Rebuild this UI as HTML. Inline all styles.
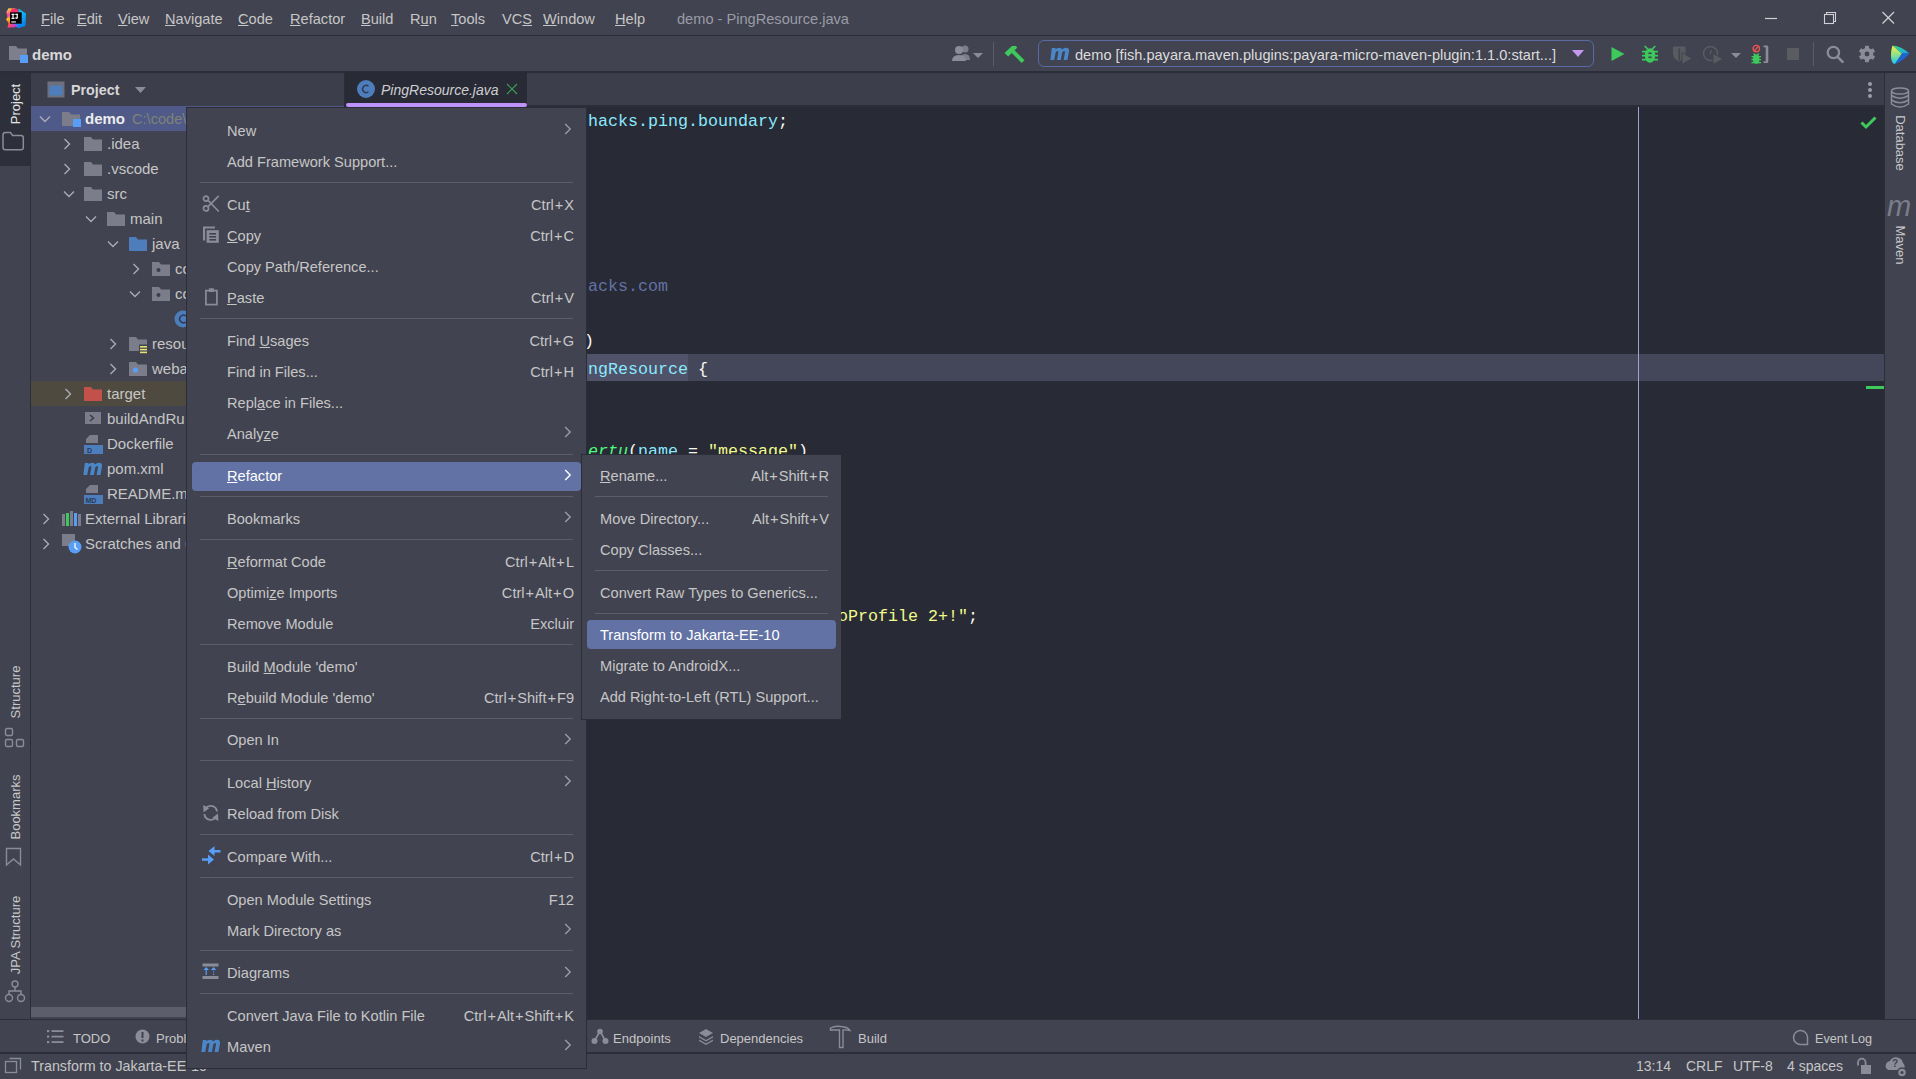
<!DOCTYPE html><html><head><meta charset="utf-8"><style>
html,body{margin:0;padding:0;}
body{width:1916px;height:1079px;overflow:hidden;position:relative;background:#414350;font-family:"Liberation Sans",sans-serif;}
.t{position:absolute;white-space:nowrap;line-height:20px;height:20px;}
.r{position:absolute;}
.s{position:absolute;overflow:visible;}
.u{text-decoration:underline;text-underline-offset:1px;text-decoration-thickness:1px;}
.code{position:absolute;white-space:pre;font-family:"Liberation Mono",monospace;font-size:16.67px;line-height:20px;height:20px;}
</style></head><body>
<div class="r" style="left:0px;top:0px;width:1916px;height:35px;background:#414350;"></div>
<div class="r" style="left:0px;top:35px;width:1916px;height:1px;background:#2b2d38;"></div>
<svg class="s" style="left:6px;top:8px;" width="21" height="21" viewBox="0 0 21 21"><defs><linearGradient id="ijl" x1="0" y1="0" x2="0" y2="1"><stop offset="0" stop-color="#fcd33a"/><stop offset="0.35" stop-color="#fc3fa8"/><stop offset="0.55" stop-color="#fcc41a"/><stop offset="0.75" stop-color="#fc6a2a"/><stop offset="1" stop-color="#fc318c"/></linearGradient>
<linearGradient id="ijr" x1="0" y1="0" x2="0.3" y2="1"><stop offset="0" stop-color="#14d6f5"/><stop offset="1" stop-color="#0a82f0"/></linearGradient></defs>
<polygon points="2.5,0.3 9,0.6 11,2.5 12,11 7,19 1.5,20 2.5,15 0,11.5 1.5,9 0.3,4" fill="url(#ijl)"/>
<polygon points="6,0.5 11,0.8 13,3.5 8,7 4,4" fill="#fc2f6e"/>
<polygon points="12.5,0.5 20,5.5 19.5,18 12,20.3 7,16 13,10" fill="url(#ijr)"/>
<polygon points="4,16 8,15 12,18 7,20" fill="#e03ad0" opacity="0.8"/>
<rect x="4" y="4.3" width="11.7" height="11.4" fill="#000"/>
<g fill="#fff"><rect x="5.4" y="5.8" width="3.2" height="1.1"/><rect x="6.4" y="5.8" width="1.2" height="5"/><rect x="5.4" y="9.8" width="3.2" height="1.1"/><rect x="9.2" y="5.8" width="2.6" height="1.1"/><rect x="10.6" y="5.8" width="1.2" height="4.4"/><path d="M8.8 9.6 Q9.3 10.9 10.4 10.9 Q11.8 10.9 11.8 9.6 V9.2 H10.6 V9.6 Q10.5 9.8 10.3 9.8 Q9.9 9.8 9.8 9.4 Z"/></g>
<rect x="5.3" y="13.4" width="4.6" height="1.1" fill="#fff"/></svg>
<div class="t" style="left:41px;top:8.50px;font-size:14.6px;color:#c6c6c6;font-weight:normal;font-style:normal;font-family:"Liberation Sans", sans-serif;"><span class="u">F</span>ile</div>
<div class="t" style="left:77px;top:8.50px;font-size:14.6px;color:#c6c6c6;font-weight:normal;font-style:normal;font-family:"Liberation Sans", sans-serif;"><span class="u">E</span>dit</div>
<div class="t" style="left:118px;top:8.50px;font-size:14.6px;color:#c6c6c6;font-weight:normal;font-style:normal;font-family:"Liberation Sans", sans-serif;"><span class="u">V</span>iew</div>
<div class="t" style="left:165px;top:8.50px;font-size:14.6px;color:#c6c6c6;font-weight:normal;font-style:normal;font-family:"Liberation Sans", sans-serif;"><span class="u">N</span>avigate</div>
<div class="t" style="left:238px;top:8.50px;font-size:14.6px;color:#c6c6c6;font-weight:normal;font-style:normal;font-family:"Liberation Sans", sans-serif;"><span class="u">C</span>ode</div>
<div class="t" style="left:290px;top:8.50px;font-size:14.6px;color:#c6c6c6;font-weight:normal;font-style:normal;font-family:"Liberation Sans", sans-serif;"><span class="u">R</span>efactor</div>
<div class="t" style="left:361px;top:8.50px;font-size:14.6px;color:#c6c6c6;font-weight:normal;font-style:normal;font-family:"Liberation Sans", sans-serif;"><span class="u">B</span>uild</div>
<div class="t" style="left:410px;top:8.50px;font-size:14.6px;color:#c6c6c6;font-weight:normal;font-style:normal;font-family:"Liberation Sans", sans-serif;">R<span class="u">u</span>n</div>
<div class="t" style="left:451px;top:8.50px;font-size:14.6px;color:#c6c6c6;font-weight:normal;font-style:normal;font-family:"Liberation Sans", sans-serif;"><span class="u">T</span>ools</div>
<div class="t" style="left:502px;top:8.50px;font-size:14.6px;color:#c6c6c6;font-weight:normal;font-style:normal;font-family:"Liberation Sans", sans-serif;">VC<span class="u">S</span></div>
<div class="t" style="left:543px;top:8.50px;font-size:14.6px;color:#c6c6c6;font-weight:normal;font-style:normal;font-family:"Liberation Sans", sans-serif;"><span class="u">W</span>indow</div>
<div class="t" style="left:615px;top:8.50px;font-size:14.6px;color:#c6c6c6;font-weight:normal;font-style:normal;font-family:"Liberation Sans", sans-serif;"><span class="u">H</span>elp</div>
<div class="t" style="left:677px;top:8.50px;font-size:14.6px;color:#9a9ca6;font-weight:normal;font-style:normal;font-family:"Liberation Sans", sans-serif;">demo - PingResource.java</div>
<svg class="s" style="left:1760px;top:8px;" width="140" height="22" viewBox="0 0 140 22"><line x1="5" y1="10.5" x2="17" y2="10.5" stroke="#cfcfd4" stroke-width="1.2"/>
<rect x="64.5" y="6.5" width="9" height="9" fill="none" stroke="#cfcfd4" stroke-width="1.1"/>
<path d="M66.5 6.5 V4.5 H75.5 V13.5 H73.5" fill="none" stroke="#cfcfd4" stroke-width="1.1"/>
<line x1="122.5" y1="4" x2="134" y2="15.5" stroke="#cfcfd4" stroke-width="1.2"/>
<line x1="134" y1="4" x2="122.5" y2="15.5" stroke="#cfcfd4" stroke-width="1.2"/></svg>
<div class="r" style="left:0px;top:36px;width:1916px;height:35px;background:#414350;"></div>
<div class="r" style="left:0px;top:71px;width:1916px;height:2px;background:#2b2d38;"></div>
<svg class="s" style="left:9px;top:46px;" width="20" height="20" viewBox="0 0 20 20"><path d="M0 0 H7 L9 2.5 H18 V14 H0 Z" fill="#7d808c"/><rect x="11" y="9" width="8" height="8" fill="#589df6"/></svg>
<div class="t" style="left:32px;top:44.50px;font-size:15px;color:#d8d8d8;font-weight:bold;font-style:normal;font-family:"Liberation Sans", sans-serif;">demo</div>
<svg class="s" style="left:950px;top:44px;" width="36" height="20" viewBox="0 0 36 20"><circle cx="15" cy="5" r="3.5" fill="#7c7f8a"/><path d="M10 16 Q10 10 15 10 Q20 10 20 16 Z" fill="#7c7f8a"/>
<circle cx="9" cy="6" r="4" fill="#8a8d98"/><path d="M2 17 Q2 11 9 11 Q16 11 16 17 Z" fill="#8a8d98"/>
<polygon points="23,9 33,9 28,14" fill="#8a8d98"/></svg>
<div class="r" style="left:993px;top:42px;width:1px;height:24px;background:#5a5c66;"></div>
<svg class="s" style="left:1004px;top:45px;" width="22" height="19" viewBox="0 0 22 19"><path d="M0.5 8 L8 1 L12 1 L13.2 2.8 L4.2 11.5 Z" fill="#3ec95c"/><path d="M6.5 6.8 L9.3 4 L20.5 15.2 L17.7 18 Z" fill="#3ec95c"/></svg>
<div class="r" style="left:1038px;top:40px;width:556px;height:27px;background:transparent;box-sizing:border-box;border:1.7px solid #5b6aa3;border-radius:6px;"></div>
<svg class="s" style="left:1049px;top:47px;" width="22" height="14" viewBox="0 0 22 14"><path d="M2.8 1 H6.6 L6.4 2.3 Q8 0.6 10.4 0.7 Q12.6 0.8 13 2.4 Q14.8 0.6 17.2 0.7 Q20.6 0.9 20 4.6 L18.4 13 H14.6 L16 5.6 Q16.3 3.9 15 3.9 Q13.6 3.9 13.2 5.7 L11.8 13 H8 L9.4 5.6 Q9.7 3.9 8.4 3.9 Q7 3.9 6.6 5.7 L5.2 13 H1.4 Z" fill="#4a86c8"/></svg>
<div class="t" style="left:1075px;top:45.00px;font-size:14.6px;color:#dcdcdc;font-weight:normal;font-style:normal;font-family:"Liberation Sans", sans-serif;letter-spacing:0.05px;">demo [fish.payara.maven.plugins:payara-micro-maven-plugin:1.1.0:start...]</div>
<svg class="s" style="left:1571px;top:49px;" width="14" height="10" viewBox="0 0 14 10"><polygon points="1,1 13,1 7,8" fill="#c39af0"/></svg>
<svg class="s" style="left:1610px;top:46px;" width="16" height="16" viewBox="0 0 16 16"><polygon points="1.5,1 14.5,8 1.5,15" fill="#3ec95c"/></svg>
<svg class="s" style="left:1642px;top:45px;" width="16" height="19" viewBox="0 0 16 19"><g fill="#3ec95c"><path d="M3.2 0.5 L6.3 3.6 L5.2 4.7 L2.1 1.6 Z"/><path d="M12.8 0.5 L9.7 3.6 L10.8 4.7 L13.9 1.6 Z"/><ellipse cx="8" cy="10.5" rx="5.2" ry="7.3"/><rect x="0" y="5.8" width="16" height="1.7"/><rect x="0" y="9.8" width="16" height="1.7"/><rect x="0" y="13.8" width="16" height="1.7"/></g><g fill="#414350"><rect x="6.4" y="7.5" width="3.2" height="1.6"/><rect x="6.4" y="11.5" width="3.2" height="1.6"/></g></svg>
<svg class="s" style="left:1672px;top:46px;" width="22" height="19" viewBox="0 0 22 19"><path d="M1 0.5 H13.5 V8 Q13.5 13 7.2 15.5 Q1 13 1 8 Z" fill="#5a5b60"/><rect x="6.5" y="2.5" width="1.6" height="12" fill="#414350"/><polygon points="10,6.5 20,12.5 10,18.5" fill="#5a5b60" stroke="#414350" stroke-width="1"/></svg>
<svg class="s" style="left:1702px;top:45px;" width="22" height="20" viewBox="0 0 22 20"><circle cx="8.5" cy="8.5" r="7" fill="none" stroke="#5a5b60" stroke-width="1.5"/><path d="M9.5 5 L8 9.5" stroke="#5a5b60" stroke-width="1.2" fill="none"/><polygon points="11,8.5 21,14 11,19.5" fill="#5a5b60" stroke="#414350" stroke-width="1"/></svg>
<svg class="s" style="left:1730px;top:52px;" width="12" height="8" viewBox="0 0 12 8"><polygon points="1,1 11,1 6,6" fill="#8a8d98"/></svg>
<svg class="s" style="left:1751px;top:44px;" width="22" height="22" viewBox="0 0 22 22"><circle cx="5.3" cy="4.6" r="3.2" fill="none" stroke="#e8544f" stroke-width="1.4"/><line x1="3" y1="6.9" x2="7.6" y2="2.3" stroke="#e8544f" stroke-width="1.4"/>
<g fill="#3ec95c"><ellipse cx="5.2" cy="15" rx="3.3" ry="4.8"/><rect x="0.5" y="12" width="9.5" height="1.3"/><rect x="0.5" y="15" width="9.5" height="1.3"/><rect x="0.5" y="18" width="9.5" height="1.3"/><path d="M2.5 9.5 L4.5 11.5 M8 9.5 L6 11.5" stroke="#3ec95c" stroke-width="1.1"/></g>
<path d="M12.5 1.5 H16 Q17.3 1.5 17.3 3 V17.5 Q17.3 19 16 19 H12.5 V17.3 H14.7 V3.2 H12.5 Z" fill="#8a8d98"/></svg>
<div class="r" style="left:1787px;top:48px;width:12px;height:12px;background:#5b5c60;"></div>
<div class="r" style="left:1813px;top:42px;width:1px;height:24px;background:#5a5c66;"></div>
<svg class="s" style="left:1825px;top:45px;" width="20" height="20" viewBox="0 0 20 20"><circle cx="8.4" cy="7.5" r="5.7" fill="none" stroke="#8a8d98" stroke-width="2.3"/><line x1="12.4" y1="11.6" x2="17.6" y2="16.9" stroke="#8a8d98" stroke-width="2.6" stroke-linecap="round"/></svg>
<svg class="s" style="left:1858px;top:45px;" width="20" height="20" viewBox="0 0 20 20"><g transform="translate(9,9)" fill="#8a8d98"><circle r="6.2"/>
<rect x="-2" y="-8.2" width="4" height="16.4" rx="0.6"/><rect x="-2" y="-8.2" width="4" height="16.4" rx="0.6" transform="rotate(60)"/><rect x="-2" y="-8.2" width="4" height="16.4" rx="0.6" transform="rotate(-60)"/>
<circle r="2.4" fill="#414350"/></g></svg>
<svg class="s" style="left:1889px;top:44px;" width="22" height="22" viewBox="0 0 22 22"><defs><linearGradient id="tbl" x1="0" y1="0" x2="0" y2="1"><stop offset="0" stop-color="#f6f23e"/><stop offset="0.5" stop-color="#8fe08a"/><stop offset="1" stop-color="#17c8f2"/></linearGradient><linearGradient id="tbr" x1="0" y1="0" x2="1" y2="1"><stop offset="0" stop-color="#3ddc84"/><stop offset="1" stop-color="#14a2f0"/></linearGradient></defs>
<path d="M3.5 1.5 L13 9.5 L6 20 Q3.5 20 2.5 16 Q1 10 3.5 1.5 Z" fill="url(#tbl)"/><path d="M3.5 1.5 Q12 2 20.5 9.5 H13 Z" fill="url(#tbr)"/><path d="M13 9.5 H20.5 Q14 17 6 20 Z" fill="#1d64d4"/></svg>
<div class="r" style="left:0px;top:73px;width:30px;height:947px;background:#414350;"></div>
<div class="r" style="left:30px;top:73px;width:1px;height:947px;background:#2b2d38;"></div>
<div class="r" style="left:0px;top:73px;width:30px;height:93px;background:#2d2f3b;"></div>
<div class="t" style="left:-34.30px;top:94.10px;width:100px;text-align:center;font-size:13px;color:#e6e6e6;transform:rotate(-90deg);">Project</div>
<svg class="s" style="left:1px;top:131px;" width="24" height="20" viewBox="0 0 24 20"><path d="M2 4 Q2 1.5 4.5 1.5 H9.5 L11.5 4.5 H20 Q22.3 4.5 22.3 7 V16.5 Q22.3 18.8 20 18.8 H4.5 Q2 18.8 2 16.5 Z" fill="none" stroke="#8a8d98" stroke-width="1.5"/></svg>
<div class="r" style="left:31px;top:73px;width:313px;height:947px;background:#414350;"></div>
<div class="r" style="left:31px;top:73px;width:313px;height:33px;background:#3c3e4c;"></div>
<div class="r" style="left:344px;top:73px;width:1px;height:947px;background:#2b2d38;"></div>
<svg class="s" style="left:47px;top:81px;" width="18" height="17" viewBox="0 0 18 17"><rect x="0.5" y="0.5" width="17" height="16" fill="#6e717c"/><rect x="2.5" y="4.5" width="13" height="10" fill="#4e7dbb"/></svg>
<div class="t" style="left:71px;top:79.50px;font-size:14.3px;color:#d6d6d6;font-weight:bold;font-style:normal;font-family:"Liberation Sans", sans-serif;">Project</div>
<svg class="s" style="left:134px;top:86px;" width="14" height="9" viewBox="0 0 14 9"><polygon points="1,1 12,1 6.5,7" fill="#8a8d98"/></svg>
<div class="r" style="left:31px;top:106px;width:313px;height:25px;background:#4f5a88;"></div>
<div class="r" style="left:31px;top:381px;width:313px;height:25px;background:#4f4a3f;"></div>
<svg class="s" style="left:39px;top:114.5px;" width="12" height="8" viewBox="0 0 12 8"><path d="M1 1.5 L6 6.5 L11 1.5" fill="none" stroke="#a9abb4" stroke-width="1.4"/></svg>
<svg class="s" style="left:62px;top:110.5px;" width="20" height="16" viewBox="0 0 20 16"><path d="M0 1 H7 L9 3.5 H18 V15 H0 Z" fill="#7b7e8a"/><rect x="11" y="8" width="8" height="8" fill="#589df6"/></svg>
<div class="t" style="left:85px;top:109.40px;font-size:15px;color:#ececec;font-weight:bold;font-style:normal;font-family:"Liberation Sans", sans-serif;">demo</div>
<div class="t" style="left:132px;top:109.40px;font-size:14.6px;color:#7f8276;font-weight:normal;font-style:normal;font-family:"Liberation Sans", sans-serif;">C:\code\</div>
<svg class="s" style="left:63px;top:137.5px;" width="8" height="12" viewBox="0 0 8 12"><path d="M1.5 1 L6.5 6 L1.5 11" fill="none" stroke="#a9abb4" stroke-width="1.4"/></svg>
<svg class="s" style="left:84px;top:135.5px;" width="20" height="16" viewBox="0 0 20 16"><path d="M0 1 H7 L9 3.5 H18 V15 H0 Z" fill="#7b7e8a"/></svg>
<div class="t" style="left:107px;top:134.40px;font-size:15px;color:#c6c6c6;font-weight:normal;font-style:normal;font-family:"Liberation Sans", sans-serif;">.idea</div>
<svg class="s" style="left:63px;top:162.5px;" width="8" height="12" viewBox="0 0 8 12"><path d="M1.5 1 L6.5 6 L1.5 11" fill="none" stroke="#a9abb4" stroke-width="1.4"/></svg>
<svg class="s" style="left:84px;top:160.5px;" width="20" height="16" viewBox="0 0 20 16"><path d="M0 1 H7 L9 3.5 H18 V15 H0 Z" fill="#7b7e8a"/></svg>
<div class="t" style="left:107px;top:159.40px;font-size:15px;color:#c6c6c6;font-weight:normal;font-style:normal;font-family:"Liberation Sans", sans-serif;">.vscode</div>
<svg class="s" style="left:63px;top:189.5px;" width="12" height="8" viewBox="0 0 12 8"><path d="M1 1.5 L6 6.5 L11 1.5" fill="none" stroke="#a9abb4" stroke-width="1.4"/></svg>
<svg class="s" style="left:84px;top:185.5px;" width="20" height="16" viewBox="0 0 20 16"><path d="M0 1 H7 L9 3.5 H18 V15 H0 Z" fill="#7b7e8a"/></svg>
<div class="t" style="left:107px;top:184.40px;font-size:15px;color:#c6c6c6;font-weight:normal;font-style:normal;font-family:"Liberation Sans", sans-serif;">src</div>
<svg class="s" style="left:85px;top:214.5px;" width="12" height="8" viewBox="0 0 12 8"><path d="M1 1.5 L6 6.5 L11 1.5" fill="none" stroke="#a9abb4" stroke-width="1.4"/></svg>
<svg class="s" style="left:107px;top:210.5px;" width="20" height="16" viewBox="0 0 20 16"><path d="M0 1 H7 L9 3.5 H18 V15 H0 Z" fill="#7b7e8a"/></svg>
<div class="t" style="left:130px;top:209.40px;font-size:15px;color:#c6c6c6;font-weight:normal;font-style:normal;font-family:"Liberation Sans", sans-serif;">main</div>
<svg class="s" style="left:107px;top:239.5px;" width="12" height="8" viewBox="0 0 12 8"><path d="M1 1.5 L6 6.5 L11 1.5" fill="none" stroke="#a9abb4" stroke-width="1.4"/></svg>
<svg class="s" style="left:129px;top:235.5px;" width="20" height="16" viewBox="0 0 20 16"><path d="M0 1 H7 L9 3.5 H18 V15 H0 Z" fill="#4e7dbb"/></svg>
<div class="t" style="left:152px;top:234.40px;font-size:15px;color:#c6c6c6;font-weight:normal;font-style:normal;font-family:"Liberation Sans", sans-serif;">java</div>
<svg class="s" style="left:132px;top:262.5px;" width="8" height="12" viewBox="0 0 8 12"><path d="M1.5 1 L6.5 6 L1.5 11" fill="none" stroke="#a9abb4" stroke-width="1.4"/></svg>
<svg class="s" style="left:152px;top:260.5px;" width="20" height="16" viewBox="0 0 20 16"><path d="M0 1 H7 L9 3.5 H18 V15 H0 Z" fill="#7b7e8a"/><circle cx="6.5" cy="9" r="2" fill="#3b3d48"/></svg>
<div class="t" style="left:175px;top:259.40px;font-size:15px;color:#c6c6c6;font-weight:normal;font-style:normal;font-family:"Liberation Sans", sans-serif;">co</div>
<svg class="s" style="left:129px;top:289.5px;" width="12" height="8" viewBox="0 0 12 8"><path d="M1 1.5 L6 6.5 L11 1.5" fill="none" stroke="#a9abb4" stroke-width="1.4"/></svg>
<svg class="s" style="left:152px;top:285.5px;" width="20" height="16" viewBox="0 0 20 16"><path d="M0 1 H7 L9 3.5 H18 V15 H0 Z" fill="#7b7e8a"/><circle cx="6.5" cy="9" r="2" fill="#3b3d48"/></svg>
<div class="t" style="left:175px;top:284.40px;font-size:15px;color:#c6c6c6;font-weight:normal;font-style:normal;font-family:"Liberation Sans", sans-serif;">co</div>
<svg class="s" style="left:174px;top:309.5px;" width="18" height="18" viewBox="0 0 18 18"><circle cx="9" cy="9" r="8.5" fill="#4e7dbb"/><path d="M11.8 6 A3.8 3.8 0 1 0 11.8 12" fill="none" stroke="#2d3a55" stroke-width="1.5"/></svg>
<svg class="s" style="left:109px;top:337.5px;" width="8" height="12" viewBox="0 0 8 12"><path d="M1.5 1 L6.5 6 L1.5 11" fill="none" stroke="#a9abb4" stroke-width="1.4"/></svg>
<svg class="s" style="left:129px;top:335.5px;" width="20" height="19" viewBox="0 0 20 19"><path d="M0 1 H7 L9 3.5 H18 V15 H0 Z" fill="#7b7e8a"/><rect x="10" y="8.5" width="9" height="10" fill="#414350"/><rect x="11" y="10" width="7" height="1.6" fill="#e4e07a"/><rect x="11" y="12.8" width="7" height="1.6" fill="#e4e07a"/><rect x="11" y="15.6" width="7" height="1.6" fill="#e4e07a"/></svg>
<div class="t" style="left:152px;top:334.40px;font-size:15px;color:#c6c6c6;font-weight:normal;font-style:normal;font-family:"Liberation Sans", sans-serif;">resou</div>
<svg class="s" style="left:109px;top:362.5px;" width="8" height="12" viewBox="0 0 8 12"><path d="M1.5 1 L6.5 6 L1.5 11" fill="none" stroke="#a9abb4" stroke-width="1.4"/></svg>
<svg class="s" style="left:129px;top:360.5px;" width="20" height="16" viewBox="0 0 20 16"><path d="M0 1 H7 L9 3.5 H18 V15 H0 Z" fill="#7b7e8a"/><circle cx="6.5" cy="9" r="2.6" fill="#589df6"/></svg>
<div class="t" style="left:152px;top:359.40px;font-size:15px;color:#c6c6c6;font-weight:normal;font-style:normal;font-family:"Liberation Sans", sans-serif;">weba</div>
<svg class="s" style="left:64px;top:387.5px;" width="8" height="12" viewBox="0 0 8 12"><path d="M1.5 1 L6.5 6 L1.5 11" fill="none" stroke="#a9abb4" stroke-width="1.4"/></svg>
<svg class="s" style="left:84px;top:385.5px;" width="20" height="16" viewBox="0 0 20 16"><path d="M0 1 H7 L9 3.5 H18 V15 H0 Z" fill="#c2504b"/></svg>
<div class="t" style="left:107px;top:384.40px;font-size:15px;color:#c6c6c6;font-weight:normal;font-style:normal;font-family:"Liberation Sans", sans-serif;">target</div>
<svg class="s" style="left:85px;top:411.5px;" width="17" height="13" viewBox="0 0 17 13"><rect x="0" y="0" width="16" height="12" fill="#7b7e8a"/><path d="M5 3 L8.5 6 L5 9" fill="none" stroke="#3b3d48" stroke-width="1.6"/></svg>
<div class="t" style="left:107px;top:409.40px;font-size:15px;color:#c6c6c6;font-weight:normal;font-style:normal;font-family:"Liberation Sans", sans-serif;">buildAndRu</div>
<svg class="s" style="left:84px;top:434.5px;" width="20" height="19" viewBox="0 0 20 19"><path d="M6 0 H14 V8 H2 V4 Z" fill="#7b7e8a"/><rect x="0" y="10" width="19" height="9" fill="#4e7dbb"/><text x="3" y="18" font-family="Liberation Sans" font-weight="bold" font-size="7" fill="#2b3a55">D</text></svg>
<div class="t" style="left:107px;top:434.40px;font-size:15px;color:#c6c6c6;font-weight:normal;font-style:normal;font-family:"Liberation Sans", sans-serif;">Dockerfile</div>
<svg class="s" style="left:82px;top:462.0px;" width="22" height="14" viewBox="0 0 22 14"><path d="M2.8 1 H6.6 L6.4 2.3 Q8 0.6 10.4 0.7 Q12.6 0.8 13 2.4 Q14.8 0.6 17.2 0.7 Q20.6 0.9 20 4.6 L18.4 13 H14.6 L16 5.6 Q16.3 3.9 15 3.9 Q13.6 3.9 13.2 5.7 L11.8 13 H8 L9.4 5.6 Q9.7 3.9 8.4 3.9 Q7 3.9 6.6 5.7 L5.2 13 H1.4 Z" fill="#4a86c8"/></svg>
<div class="t" style="left:107px;top:459.40px;font-size:15px;color:#c6c6c6;font-weight:normal;font-style:normal;font-family:"Liberation Sans", sans-serif;">pom.xml</div>
<svg class="s" style="left:84px;top:484.5px;" width="20" height="19" viewBox="0 0 20 19"><path d="M6 0 H14 V8 H2 V4 Z" fill="#7b7e8a"/><rect x="0" y="10" width="19" height="9" fill="#4e7dbb"/><text x="1.5" y="18" font-family="Liberation Sans" font-weight="bold" font-size="7" fill="#2b3a55">MD</text></svg>
<div class="t" style="left:107px;top:484.40px;font-size:15px;color:#c6c6c6;font-weight:normal;font-style:normal;font-family:"Liberation Sans", sans-serif;">README.md</div>
<svg class="s" style="left:42px;top:512.5px;" width="8" height="12" viewBox="0 0 8 12"><path d="M1.5 1 L6.5 6 L1.5 11" fill="none" stroke="#a9abb4" stroke-width="1.4"/></svg>
<svg class="s" style="left:62px;top:510.5px;" width="20" height="15" viewBox="0 0 20 15"><rect x="0" y="3" width="3" height="12" fill="#7b7e8a"/><rect x="4" y="2" width="3" height="13" fill="#3ec95c"/><rect x="8" y="0" width="3" height="15" fill="#7b7e8a"/><rect x="12" y="2" width="3" height="13" fill="#589df6"/><rect x="16" y="3" width="3" height="12" fill="#7b7e8a"/></svg>
<div class="t" style="left:85px;top:509.40px;font-size:15px;color:#c6c6c6;font-weight:normal;font-style:normal;font-family:"Liberation Sans", sans-serif;">External Libraries</div>
<svg class="s" style="left:42px;top:537.5px;" width="8" height="12" viewBox="0 0 8 12"><path d="M1.5 1 L6.5 6 L1.5 11" fill="none" stroke="#a9abb4" stroke-width="1.4"/></svg>
<svg class="s" style="left:62px;top:533.5px;" width="22" height="20" viewBox="0 0 22 20"><rect x="0" y="0" width="13" height="12" fill="#7b7e8a"/><circle cx="13" cy="13" r="6.5" fill="#589df6"/><path d="M13 9 V13.5 L15.5 15.5" fill="none" stroke="#fff" stroke-width="1.3"/></svg>
<div class="t" style="left:85px;top:534.40px;font-size:15px;color:#c6c6c6;font-weight:normal;font-style:normal;font-family:"Liberation Sans", sans-serif;">Scratches and Consoles</div>
<div class="r" style="left:31px;top:1007px;width:313px;height:10px;background:#5c5f6b;"></div>
<div class="r" style="left:345px;top:73px;width:1539px;height:32px;background:#3c3e4c;"></div>
<div class="r" style="left:345px;top:105px;width:1539px;height:2px;background:#2b2d38;"></div>
<div class="r" style="left:345px;top:72px;width:182px;height:35px;background:#282a36;"></div>
<div class="r" style="left:346px;top:103px;width:181px;height:4px;background:#bd93f9;border-radius:2px;"></div>
<svg class="s" style="left:357px;top:80px;" width="19" height="19" viewBox="0 0 19 19"><circle cx="9" cy="9" r="9" fill="#4e7dbb"/><path d="M11.5 6.2 A3.6 3.6 0 1 0 11.5 11.8" fill="none" stroke="#2b3a55" stroke-width="1.4"/></svg>
<div class="t" style="left:381px;top:79.50px;font-size:14px;color:#cfcfcf;font-weight:normal;font-style:italic;font-family:"Liberation Sans", sans-serif;">PingResource.java</div>
<svg class="s" style="left:506px;top:83px;" width="12" height="12" viewBox="0 0 12 12"><path d="M1 1 L11 11 M11 1 L1 11" stroke="#3a9e54" stroke-width="1.2"/></svg>
<svg class="s" style="left:1866px;top:81px;" width="8" height="18" viewBox="0 0 8 18"><circle cx="4" cy="3" r="2" fill="#9a9ca6"/><circle cx="4" cy="9" r="2" fill="#9a9ca6"/><circle cx="4" cy="15" r="2" fill="#9a9ca6"/></svg>
<div class="r" style="left:345px;top:107px;width:1539px;height:913px;background:#282a36;"></div>
<div class="r" style="left:345px;top:354px;width:1539px;height:27px;background:#44475a;"></div>
<div class="r" style="left:586px;top:354px;width:102px;height:27px;background:#4f5269;"></div>
<div class="r" style="left:1638px;top:107px;width:1px;height:913px;background:#9ea2d4;"></div>
<svg class="s" style="left:1860px;top:116px;" width="17" height="13" viewBox="0 0 17 13"><path d="M1.5 6.5 L6 11 L15.5 1.5" fill="none" stroke="#3ec95c" stroke-width="3"/></svg>
<div class="r" style="left:1866px;top:386px;width:18px;height:3px;background:#3ec95c;"></div>
<div class="code" style="left:588px;top:112.16px;"><span style="color:#8be9fd">hacks.ping.boundary</span><span style="color:#f8f8f2">;</span></div>
<div class="code" style="left:588px;top:277.16px;"><span style="color:#6272a4">acks.com</span></div>
<div class="code" style="left:574px;top:332.16px;"><span style="color:#f8f8f2">")</span></div>
<div class="code" style="left:588px;top:359.66px;"><span style="color:#8be9fd">ngResource</span><span style="color:#f8f8f2"> {</span></div>
<div class="code" style="left:588px;top:442.16px;"><span style="color:#50fa7b;font-style:italic">ertu</span><span style="color:#f8f8f2">(</span><span style="color:#8be9fd">name</span><span style="color:#f8f8f2"> = </span><span style="color:#f1fa8c">"message"</span><span style="color:#f8f8f2">)</span></div>
<div class="code" style="left:838px;top:607.16px;"><span style="color:#f1fa8c">oProfile 2+!"</span><span style="color:#f8f8f2">;</span></div>
<div class="r" style="left:1884px;top:73px;width:1px;height:947px;background:#2b2d38;"></div>
<div class="r" style="left:1885px;top:73px;width:31px;height:947px;background:#414350;"></div>
<svg class="s" style="left:1890px;top:87px;" width="21" height="22" viewBox="0 0 21 22"><g fill="none" stroke="#8a8d98" stroke-width="1.5"><ellipse cx="10" cy="4" rx="8.5" ry="3"/><path d="M1.5 4 V17 Q10 23 18.5 17 V4"/><path d="M1.5 8.5 Q10 14 18.5 8.5"/><path d="M1.5 13 Q10 18.5 18.5 13"/></g></svg>
<div class="t" style="left:1849.50px;top:132.50px;width:100px;text-align:center;font-size:13px;color:#c8c8c8;transform:rotate(90deg);">Database</div>
<div class="t" style="left:1887px;top:196.00px;font-size:29px;color:#7b7e8a;font-weight:normal;font-style:normal;font-family:"Liberation Sans", sans-serif;line-height:20px;"><i>m</i></div>
<div class="t" style="left:1849.50px;top:235.00px;width:100px;text-align:center;font-size:13px;color:#c8c8c8;transform:rotate(90deg);">Maven</div>
<div class="t" style="left:-34.50px;top:682.20px;width:100px;text-align:center;font-size:13px;color:#c8c8c8;transform:rotate(-90deg);">Structure</div>
<svg class="s" style="left:4px;top:727px;" width="22" height="22" viewBox="0 0 22 22"><g fill="none" stroke="#8a8d98" stroke-width="1.4"><rect x="1.5" y="1.5" width="7" height="7" rx="1.5"/><rect x="1.5" y="12.5" width="7" height="7" rx="1.5"/><rect x="12.5" y="12.5" width="7" height="7" rx="1.5"/></g></svg>
<div class="t" style="left:-34.50px;top:796.80px;width:100px;text-align:center;font-size:13px;color:#c8c8c8;transform:rotate(-90deg);">Bookmarks</div>
<svg class="s" style="left:5px;top:847px;" width="18" height="20" viewBox="0 0 18 20"><path d="M1.5 1.5 H15.5 V18 L8.5 12 L1.5 18 Z" fill="none" stroke="#8a8d98" stroke-width="1.4"/></svg>
<div class="t" style="left:-34.50px;top:925.20px;width:100px;text-align:center;font-size:13px;color:#c8c8c8;transform:rotate(-90deg);">JPA Structure</div>
<svg class="s" style="left:4px;top:980px;" width="22" height="24" viewBox="0 0 22 24"><g fill="none" stroke="#8a8d98" stroke-width="1.4"><circle cx="11" cy="4" r="3"/><circle cx="5" cy="18" r="3.5"/><circle cx="17" cy="18" r="3.5"/><path d="M11 7 V11 M5 14.5 V11 H17 V14.5"/></g></svg>
<div class="r" style="left:0px;top:1019px;width:1916px;height:1px;background:#2b2d38;"></div>
<div class="r" style="left:0px;top:1020px;width:1916px;height:32px;background:#414350;"></div>
<div class="r" style="left:0px;top:1052px;width:1916px;height:2px;background:#2b2d38;"></div>
<div class="r" style="left:1884px;top:1020px;width:1px;height:0px;background:#2b2d38;"></div>
<svg class="s" style="left:46px;top:1029px;" width="20" height="16" viewBox="0 0 20 16"><g fill="#8a8d98"><rect x="1" y="1" width="2.2" height="2.2"/><rect x="1" y="6.5" width="2.2" height="2.2"/><rect x="1" y="12" width="2.2" height="2.2"/><rect x="5.5" y="1.2" width="12" height="1.8"/><rect x="5.5" y="6.7" width="12" height="1.8"/><rect x="5.5" y="12.2" width="12" height="1.8"/></g></svg>
<div class="t" style="left:73px;top:1028.50px;font-size:13px;color:#c6c6c6;font-weight:normal;font-style:normal;font-family:"Liberation Sans", sans-serif;">TODO</div>
<svg class="s" style="left:135px;top:1029px;" width="16" height="16" viewBox="0 0 16 16"><circle cx="7.5" cy="7.5" r="7" fill="#8a8d98"/><rect x="6.5" y="3" width="2" height="6" fill="#414350"/><rect x="6.5" y="10.5" width="2" height="2" fill="#414350"/></svg>
<div class="t" style="left:156px;top:1028.50px;font-size:13px;color:#c6c6c6;font-weight:normal;font-style:normal;font-family:"Liberation Sans", sans-serif;">Problems</div>
<svg class="s" style="left:591px;top:1028px;" width="18" height="18" viewBox="0 0 18 18"><g fill="#8a8d98"><circle cx="9" cy="3.5" r="2.8"/><circle cx="3.5" cy="13" r="3"/><circle cx="14.5" cy="13" r="3"/></g><path d="M8 5 L4 12 M10 5 L14 12" stroke="#8a8d98" stroke-width="1.6"/></svg>
<div class="t" style="left:613px;top:1028.50px;font-size:13px;color:#c6c6c6;font-weight:normal;font-style:normal;font-family:"Liberation Sans", sans-serif;">Endpoints</div>
<svg class="s" style="left:698px;top:1028px;" width="16" height="18" viewBox="0 0 16 18"><g fill="#8a8d98"><path d="M8 1 L15 5 L8 9 L1 5 Z"/><path d="M1 8 L8 12 L15 8 V9.5 L8 13.5 L1 9.5 Z"/><path d="M1 11.5 L8 15.5 L15 11.5 V13 L8 17 L1 13 Z"/></g></svg>
<div class="t" style="left:720px;top:1028.50px;font-size:13px;color:#c6c6c6;font-weight:normal;font-style:normal;font-family:"Liberation Sans", sans-serif;">Dependencies</div>
<svg class="s" style="left:829px;top:1025px;" width="24" height="24" viewBox="0 0 24 24"><path d="M1.5 3 Q6 0.5 12 1.5 Q19 2 21 5.5 Q17 4.5 14 5 V22.5 H10.5 V5 H1.5 Z" fill="none" stroke="#8a8d98" stroke-width="1.4"/></svg>
<div class="t" style="left:858px;top:1028.50px;font-size:13px;color:#c6c6c6;font-weight:normal;font-style:normal;font-family:"Liberation Sans", sans-serif;">Build</div>
<svg class="s" style="left:1792px;top:1028px;" width="18" height="18" viewBox="0 0 18 18"><path d="M15.5 16.5 V9 A7 7 0 1 0 8.5 16.5 Z" fill="none" stroke="#8a8d98" stroke-width="1.5"/></svg>
<div class="t" style="left:1815px;top:1028.50px;font-size:12.7px;color:#c6c6c6;font-weight:normal;font-style:normal;font-family:"Liberation Sans", sans-serif;">Event Log</div>
<div class="r" style="left:0px;top:1054px;width:1916px;height:25px;background:#414350;"></div>
<svg class="s" style="left:4px;top:1057px;" width="18" height="18" viewBox="0 0 18 18"><path d="M5.5 1.5 H16.5 V12.5" fill="none" stroke="#8a8d98" stroke-width="1.3"/><rect x="1.5" y="4.5" width="11" height="11" fill="none" stroke="#8a8d98" stroke-width="1.3"/></svg>
<div class="t" style="left:31px;top:1055.50px;font-size:14.3px;color:#c6c6c6;font-weight:normal;font-style:normal;font-family:"Liberation Sans", sans-serif;">Transform to Jakarta-EE-10</div>
<div class="t" style="left:1636px;top:1055.50px;font-size:14px;color:#c6c6c6;font-weight:normal;font-style:normal;font-family:"Liberation Sans", sans-serif;">13:14</div>
<div class="t" style="left:1686px;top:1055.50px;font-size:14px;color:#c6c6c6;font-weight:normal;font-style:normal;font-family:"Liberation Sans", sans-serif;">CRLF</div>
<div class="t" style="left:1733px;top:1055.50px;font-size:14px;color:#c6c6c6;font-weight:normal;font-style:normal;font-family:"Liberation Sans", sans-serif;">UTF-8</div>
<div class="t" style="left:1787px;top:1055.50px;font-size:14px;color:#c6c6c6;font-weight:normal;font-style:normal;font-family:"Liberation Sans", sans-serif;">4 spaces</div>
<svg class="s" style="left:1856px;top:1057px;" width="16" height="18" viewBox="0 0 16 18"><path d="M2 8.5 V5.5 A3.8 3.8 0 0 1 9.6 5.5 V8" fill="none" stroke="#8a8d98" stroke-width="1.8"/><rect x="5" y="8" width="10" height="9" fill="#8a8d98"/></svg>
<svg class="s" style="left:1884px;top:1056px;" width="24" height="22" viewBox="0 0 24 22"><path d="M2 12 A5 5 0 0 1 6 5 A7 7 0 0 1 19 7 A4.5 4.5 0 0 1 19 14 H4 Z" fill="#8a8d98"/><text x="8" y="11" font-family="Liberation Sans" font-weight="bold" font-size="10" fill="#414350">?</text><circle cx="18" cy="16.5" r="4.5" fill="#8a8d98" stroke="#414350" stroke-width="1.5"/><circle cx="18" cy="16.5" r="1.5" fill="#414350"/></svg>
<div class="r" style="left:186px;top:107px;width:401px;height:962px;background:#414350;box-sizing:border-box;border:1px solid #2b2d38;"></div>
<div class="t" style="left:227px;top:121.20px;font-size:14.6px;color:#c6c6c6;font-weight:normal;font-style:normal;font-family:"Liberation Sans", sans-serif;">New</div>
<svg class="s" style="left:564px;top:123.39999999999999px;" width="8" height="12" viewBox="0 0 8 12"><path d="M1.2 1 L6.2 6 L1.2 11" fill="none" stroke="#9a9ca6" stroke-width="1.4"/></svg>
<div class="t" style="left:227px;top:152.20px;font-size:14.6px;color:#c6c6c6;font-weight:normal;font-style:normal;font-family:"Liberation Sans", sans-serif;">Add Framework Support...</div>
<div class="r" style="left:200px;top:182px;width:373px;height:1px;background:#5b5d68;"></div>
<svg class="s" style="left:202px;top:194.95px;" width="18" height="18" viewBox="0 0 18 18"><g fill="none" stroke="#8a8d98" stroke-width="1.7"><circle cx="4" cy="3.6" r="2.5"/><circle cx="4" cy="13.4" r="2.5"/><path d="M6 5.4 L16.8 16.5 M6 11.6 L16.8 0.8"/></g></svg>
<div class="t" style="left:227px;top:194.95px;font-size:14.6px;color:#c6c6c6;font-weight:normal;font-style:normal;font-family:"Liberation Sans", sans-serif;">Cu<span class="u">t</span></div>
<div class="t" style="right:1342px;top:194.95px;font-size:14.6px;color:#c6c6c6;">Ctrl<span style="margin:0 1px">+</span>X</div>
<svg class="s" style="left:202px;top:225.95px;" width="18" height="18" viewBox="0 0 18 18"><path d="M1 14.5 V0.5 H13 V2.6 H3.1 V14.5 Z" fill="#8a8d98"/><rect x="4.6" y="4.2" width="12.2" height="12.6" fill="#8a8d98"/><g fill="#414350"><rect x="7.3" y="7" width="6.8" height="1.6"/><rect x="7.3" y="10" width="6.8" height="1.6"/><rect x="7.3" y="13" width="6.8" height="1.6"/></g></svg>
<div class="t" style="left:227px;top:225.95px;font-size:14.6px;color:#c6c6c6;font-weight:normal;font-style:normal;font-family:"Liberation Sans", sans-serif;"><span class="u">C</span>opy</div>
<div class="t" style="right:1342px;top:225.95px;font-size:14.6px;color:#c6c6c6;">Ctrl<span style="margin:0 1px">+</span>C</div>
<div class="t" style="left:227px;top:256.95px;font-size:14.6px;color:#c6c6c6;font-weight:normal;font-style:normal;font-family:"Liberation Sans", sans-serif;">Copy Path/Reference...</div>
<svg class="s" style="left:202px;top:287.95px;" width="18" height="18" viewBox="0 0 18 18"><rect x="3.9" y="2.6" width="11" height="14" fill="none" stroke="#8a8d98" stroke-width="1.7"/><rect x="6.9" y="0.3" width="5" height="3.6" fill="#8a8d98"/></svg>
<div class="t" style="left:227px;top:287.95px;font-size:14.6px;color:#c6c6c6;font-weight:normal;font-style:normal;font-family:"Liberation Sans", sans-serif;"><span class="u">P</span>aste</div>
<div class="t" style="right:1342px;top:287.95px;font-size:14.6px;color:#c6c6c6;">Ctrl<span style="margin:0 1px">+</span>V</div>
<div class="r" style="left:200px;top:318px;width:373px;height:1px;background:#5b5d68;"></div>
<div class="t" style="left:227px;top:330.70px;font-size:14.6px;color:#c6c6c6;font-weight:normal;font-style:normal;font-family:"Liberation Sans", sans-serif;">Find <span class="u">U</span>sages</div>
<div class="t" style="right:1342px;top:330.70px;font-size:14.6px;color:#c6c6c6;">Ctrl<span style="margin:0 1px">+</span>G</div>
<div class="t" style="left:227px;top:361.70px;font-size:14.6px;color:#c6c6c6;font-weight:normal;font-style:normal;font-family:"Liberation Sans", sans-serif;">Find in Files...</div>
<div class="t" style="right:1342px;top:361.70px;font-size:14.6px;color:#c6c6c6;">Ctrl<span style="margin:0 1px">+</span>H</div>
<div class="t" style="left:227px;top:392.70px;font-size:14.6px;color:#c6c6c6;font-weight:normal;font-style:normal;font-family:"Liberation Sans", sans-serif;">Repl<span class="u">a</span>ce in Files...</div>
<div class="t" style="left:227px;top:423.70px;font-size:14.6px;color:#c6c6c6;font-weight:normal;font-style:normal;font-family:"Liberation Sans", sans-serif;">Analy<span class="u">z</span>e</div>
<svg class="s" style="left:564px;top:425.9px;" width="8" height="12" viewBox="0 0 8 12"><path d="M1.2 1 L6.2 6 L1.2 11" fill="none" stroke="#9a9ca6" stroke-width="1.4"/></svg>
<div class="r" style="left:200px;top:454px;width:373px;height:1px;background:#5b5d68;"></div>
<div class="r" style="left:192px;top:462px;width:389px;height:29px;background:#6272a4;border-radius:4px;"></div>
<div class="t" style="left:227px;top:466.45px;font-size:14.6px;color:#ffffff;font-weight:normal;font-style:normal;font-family:"Liberation Sans", sans-serif;"><span class="u">R</span>efactor</div>
<svg class="s" style="left:564px;top:468.65px;" width="8" height="12" viewBox="0 0 8 12"><path d="M1.2 1 L6.2 6 L1.2 11" fill="none" stroke="#ffffff" stroke-width="1.4"/></svg>
<div class="r" style="left:200px;top:496px;width:373px;height:1px;background:#5b5d68;"></div>
<div class="t" style="left:227px;top:509.20px;font-size:14.6px;color:#c6c6c6;font-weight:normal;font-style:normal;font-family:"Liberation Sans", sans-serif;">Bookmarks</div>
<svg class="s" style="left:564px;top:511.40000000000003px;" width="8" height="12" viewBox="0 0 8 12"><path d="M1.2 1 L6.2 6 L1.2 11" fill="none" stroke="#9a9ca6" stroke-width="1.4"/></svg>
<div class="r" style="left:200px;top:539px;width:373px;height:1px;background:#5b5d68;"></div>
<div class="t" style="left:227px;top:551.95px;font-size:14.6px;color:#c6c6c6;font-weight:normal;font-style:normal;font-family:"Liberation Sans", sans-serif;"><span class="u">R</span>eformat Code</div>
<div class="t" style="right:1342px;top:551.95px;font-size:14.6px;color:#c6c6c6;">Ctrl<span style="margin:0 1px">+</span>Alt<span style="margin:0 1px">+</span>L</div>
<div class="t" style="left:227px;top:582.95px;font-size:14.6px;color:#c6c6c6;font-weight:normal;font-style:normal;font-family:"Liberation Sans", sans-serif;">Optimi<span class="u">z</span>e Imports</div>
<div class="t" style="right:1342px;top:582.95px;font-size:14.6px;color:#c6c6c6;">Ctrl<span style="margin:0 1px">+</span>Alt<span style="margin:0 1px">+</span>O</div>
<div class="t" style="left:227px;top:613.95px;font-size:14.6px;color:#c6c6c6;font-weight:normal;font-style:normal;font-family:"Liberation Sans", sans-serif;">Remove Module</div>
<div class="t" style="right:1342px;top:613.95px;font-size:14.6px;color:#c6c6c6;">Excluir</div>
<div class="r" style="left:200px;top:644px;width:373px;height:1px;background:#5b5d68;"></div>
<div class="t" style="left:227px;top:656.70px;font-size:14.6px;color:#c6c6c6;font-weight:normal;font-style:normal;font-family:"Liberation Sans", sans-serif;">Build <span class="u">M</span>odule &#39;demo&#39;</div>
<div class="t" style="left:227px;top:687.70px;font-size:14.6px;color:#c6c6c6;font-weight:normal;font-style:normal;font-family:"Liberation Sans", sans-serif;">R<span class="u">e</span>build Module &#39;demo&#39;</div>
<div class="t" style="right:1342px;top:687.70px;font-size:14.6px;color:#c6c6c6;">Ctrl<span style="margin:0 1px">+</span>Shift<span style="margin:0 1px">+</span>F9</div>
<div class="r" style="left:200px;top:718px;width:373px;height:1px;background:#5b5d68;"></div>
<div class="t" style="left:227px;top:730.45px;font-size:14.6px;color:#c6c6c6;font-weight:normal;font-style:normal;font-family:"Liberation Sans", sans-serif;">Open In</div>
<svg class="s" style="left:564px;top:732.6500000000001px;" width="8" height="12" viewBox="0 0 8 12"><path d="M1.2 1 L6.2 6 L1.2 11" fill="none" stroke="#9a9ca6" stroke-width="1.4"/></svg>
<div class="r" style="left:200px;top:760px;width:373px;height:1px;background:#5b5d68;"></div>
<div class="t" style="left:227px;top:773.20px;font-size:14.6px;color:#c6c6c6;font-weight:normal;font-style:normal;font-family:"Liberation Sans", sans-serif;">Local <span class="u">H</span>istory</div>
<svg class="s" style="left:564px;top:775.4000000000001px;" width="8" height="12" viewBox="0 0 8 12"><path d="M1.2 1 L6.2 6 L1.2 11" fill="none" stroke="#9a9ca6" stroke-width="1.4"/></svg>
<svg class="s" style="left:202px;top:804.2px;" width="18" height="18" viewBox="0 0 18 18"><g fill="none" stroke="#8a8d98" stroke-width="1.9"><path d="M15 7.5 A6.3 6.3 0 0 0 3.6 4.6"/><path d="M2.4 10.2 A6.3 6.3 0 0 0 13.8 13.2"/></g><polygon points="1.2,1 7.2,4.2 1.6,8.6" fill="#8a8d98"/><polygon points="16.4,17 10.4,13.8 16,9.4" fill="#8a8d98"/></svg>
<div class="t" style="left:227px;top:804.20px;font-size:14.6px;color:#c6c6c6;font-weight:normal;font-style:normal;font-family:"Liberation Sans", sans-serif;">Reload from Disk</div>
<div class="r" style="left:200px;top:834px;width:373px;height:1px;background:#5b5d68;"></div>
<svg class="s" style="left:202px;top:845.95px;" width="19" height="19" viewBox="0 0 19 19"><g fill="#589df6"><polygon points="12.5,0 12.5,10 6.5,5"/><rect x="10" y="4" width="8.5" height="2.5"/><polygon points="6,8.5 6,18.5 12,13.5"/><rect x="0" y="12.3" width="8.5" height="2.5"/></g></svg>
<div class="t" style="left:227px;top:846.95px;font-size:14.6px;color:#c6c6c6;font-weight:normal;font-style:normal;font-family:"Liberation Sans", sans-serif;">Compare With...</div>
<div class="t" style="right:1342px;top:846.95px;font-size:14.6px;color:#c6c6c6;">Ctrl<span style="margin:0 1px">+</span>D</div>
<div class="r" style="left:200px;top:877px;width:373px;height:1px;background:#5b5d68;"></div>
<div class="t" style="left:227px;top:889.70px;font-size:14.6px;color:#c6c6c6;font-weight:normal;font-style:normal;font-family:"Liberation Sans", sans-serif;">Open Module Settings</div>
<div class="t" style="right:1342px;top:889.70px;font-size:14.6px;color:#c6c6c6;">F12</div>
<div class="t" style="left:227px;top:920.70px;font-size:14.6px;color:#c6c6c6;font-weight:normal;font-style:normal;font-family:"Liberation Sans", sans-serif;">Mark Directory as</div>
<svg class="s" style="left:564px;top:922.9000000000001px;" width="8" height="12" viewBox="0 0 8 12"><path d="M1.2 1 L6.2 6 L1.2 11" fill="none" stroke="#9a9ca6" stroke-width="1.4"/></svg>
<div class="r" style="left:200px;top:950px;width:373px;height:1px;background:#5b5d68;"></div>
<svg class="s" style="left:202px;top:963.45px;" width="18" height="18" viewBox="0 0 18 18"><rect x="0.5" y="0.5" width="16" height="3" fill="#8a8d98"/><rect x="0.5" y="13" width="16" height="3" fill="#8a8d98"/><g fill="#589df6"><rect x="3.6" y="6" width="1.2" height="6"/><polygon points="1.5,7 4.2,4 6.9,7"/><rect x="11" y="6" width="1.2" height="1.2"/><rect x="11" y="8.4" width="1.2" height="1.2"/><rect x="11" y="10.8" width="1.2" height="1.2"/><polygon points="8.9,7 11.6,4 14.3,7"/></g></svg>
<div class="t" style="left:227px;top:963.45px;font-size:14.6px;color:#c6c6c6;font-weight:normal;font-style:normal;font-family:"Liberation Sans", sans-serif;">Diagrams</div>
<svg class="s" style="left:564px;top:965.6500000000001px;" width="8" height="12" viewBox="0 0 8 12"><path d="M1.2 1 L6.2 6 L1.2 11" fill="none" stroke="#9a9ca6" stroke-width="1.4"/></svg>
<div class="r" style="left:200px;top:993px;width:373px;height:1px;background:#5b5d68;"></div>
<div class="t" style="left:227px;top:1006.20px;font-size:14.6px;color:#c6c6c6;font-weight:normal;font-style:normal;font-family:"Liberation Sans", sans-serif;">Convert Java File to Kotlin File</div>
<div class="t" style="right:1342px;top:1006.20px;font-size:14.6px;color:#c6c6c6;">Ctrl<span style="margin:0 1px">+</span>Alt<span style="margin:0 1px">+</span>Shift<span style="margin:0 1px">+</span>K</div>
<svg class="s" style="left:200px;top:1039.2px;" width="22" height="14" viewBox="0 0 22 14"><path d="M2.8 1 H6.6 L6.4 2.3 Q8 0.6 10.4 0.7 Q12.6 0.8 13 2.4 Q14.8 0.6 17.2 0.7 Q20.6 0.9 20 4.6 L18.4 13 H14.6 L16 5.6 Q16.3 3.9 15 3.9 Q13.6 3.9 13.2 5.7 L11.8 13 H8 L9.4 5.6 Q9.7 3.9 8.4 3.9 Q7 3.9 6.6 5.7 L5.2 13 H1.4 Z" fill="#4a86c8"/></svg>
<div class="t" style="left:227px;top:1037.20px;font-size:14.6px;color:#c6c6c6;font-weight:normal;font-style:normal;font-family:"Liberation Sans", sans-serif;">Maven</div>
<svg class="s" style="left:564px;top:1039.4px;" width="8" height="12" viewBox="0 0 8 12"><path d="M1.2 1 L6.2 6 L1.2 11" fill="none" stroke="#9a9ca6" stroke-width="1.4"/></svg>
<div class="r" style="left:581px;top:454px;width:260px;height:266px;background:#414350;box-sizing:border-box;border:1px solid #2b2d38;border-right:none;"></div>
<div class="t" style="left:600px;top:466.20px;font-size:14.6px;color:#c6c6c6;font-weight:normal;font-style:normal;font-family:"Liberation Sans", sans-serif;"><span class="u">R</span>ename...</div>
<div class="t" style="right:1087px;top:466.20px;font-size:14.6px;color:#c6c6c6;">Alt<span style="margin:0 1px">+</span>Shift<span style="margin:0 1px">+</span>R</div>
<div class="r" style="left:595px;top:496px;width:233px;height:1px;background:#5b5d68;"></div>
<div class="t" style="left:600px;top:508.95px;font-size:14.6px;color:#c6c6c6;font-weight:normal;font-style:normal;font-family:"Liberation Sans", sans-serif;">Move Directory...</div>
<div class="t" style="right:1087px;top:508.95px;font-size:14.6px;color:#c6c6c6;">Alt<span style="margin:0 1px">+</span>Shift<span style="margin:0 1px">+</span>V</div>
<div class="t" style="left:600px;top:539.95px;font-size:14.6px;color:#c6c6c6;font-weight:normal;font-style:normal;font-family:"Liberation Sans", sans-serif;">Copy Classes...</div>
<div class="r" style="left:595px;top:570px;width:233px;height:1px;background:#5b5d68;"></div>
<div class="t" style="left:600px;top:582.70px;font-size:14.6px;color:#c6c6c6;font-weight:normal;font-style:normal;font-family:"Liberation Sans", sans-serif;">Convert Raw Types to Generics...</div>
<div class="r" style="left:595px;top:613px;width:233px;height:1px;background:#5b5d68;"></div>
<div class="r" style="left:587px;top:620px;width:249px;height:29px;background:#6272a4;border-radius:4px;"></div>
<div class="t" style="left:600px;top:625.45px;font-size:14.6px;color:#ffffff;font-weight:normal;font-style:normal;font-family:"Liberation Sans", sans-serif;">Transform to Jakarta-EE-10</div>
<div class="t" style="left:600px;top:656.45px;font-size:14.6px;color:#c6c6c6;font-weight:normal;font-style:normal;font-family:"Liberation Sans", sans-serif;">Migrate to AndroidX...</div>
<div class="t" style="left:600px;top:687.45px;font-size:14.6px;color:#c6c6c6;font-weight:normal;font-style:normal;font-family:"Liberation Sans", sans-serif;">Add Right-to-Left (RTL) Support...</div>
</body></html>
